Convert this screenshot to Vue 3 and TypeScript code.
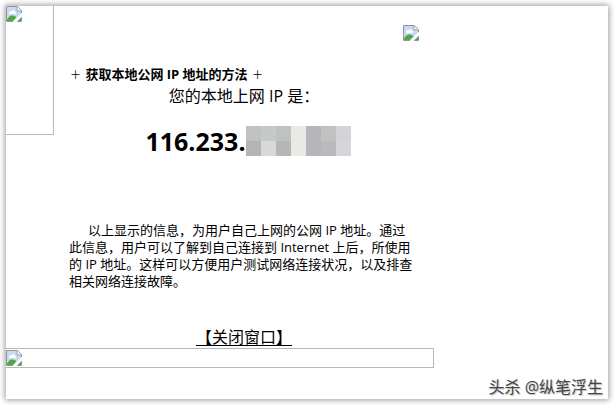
<script setup lang="ts">
const maskColors: string[] = [
  '#c1c3c3', '#c6c9c9', '#c0c1c1', '#eae9e5', '#b5b6bb', '#c2c1c1', '#d2d4d8',
  '#b3b4b4', '#d8dada', '#b5b6b5', '#eae9e5', '#b5b6bb', '#b9babe', '#d5d6d9',
]

const lines: string[] = [
  '以上显示的信息，为用户自己上网的公网 IP 地址。通过',
  '此信息，用户可以了解到自己连接到 Internet 上后，所使用',
  '的 IP 地址。这样可以方便用户测试网络连接状况，以及排查',
  '相关网络连接故障。',
]

function closeWindow(): void {
  window.close()
}
</script>

<template>
  <svg class="symbols" aria-hidden="true">
    <symbol id="broken" viewBox="0 0 16 16">
      <path d="M.5 .5H11.5L15.5 4.5V15.5H.5Z" fill="#fff" />
      <path d="M1 1H11V5H15V8L7.500 15H1Z" fill="#c6d8f3" />
      <path d="M3 6.500C3 5 5 5 5.500 5.500C6 3.500 9 4 9 6C10.500 6 10.500 8 9 8H4C2.500 8 2.500 6.500 3 6.500Z" fill="#fff" />
      <path d="M1 15V13.500C3.500 9 7.500 8.500 10.500 11.500L7 15Z" fill="#50a83f" />
      <path d="M11 15L15 11V15Z" fill="#50a83f" />
      <path d="M.5 15.500V.5H11.500L15.500 4.500V8M.5 15.500H7M11 15.500H15.500V11" fill="none" stroke="#929599" />
      <path d="M11 .5V5H15.500" fill="#f4f6f8" stroke="#a5a8ab" />
      <path d="M16 7V10.500L10.500 16H6.500L15.500 7Z" fill="#fff" />
    </symbol>
  </svg>
  <main class="sheet">
    <div class="page">
      <div class="top">
        <div class="missing side"><svg class="icon"><use href="#broken" /></svg></div>
        <article class="content">
          <svg class="icon corner"><use href="#broken" /></svg>
          <h1 class="heading"><span class="plus">＋</span> 获取本地公网 IP 地址的方法 <span class="plus">＋</span></h1>
          <p class="caption">您的本地上网 IP 是：</p>
          <div class="address">
            <strong>116.233.</strong>
            <span class="mask">
              <i v-for="(color, i) in maskColors" :key="i" :style="{ background: color }"></i>
            </span>
          </div>
          <p class="info">
            <span v-for="line in lines" :key="line" class="line">{{ line }}</span>
          </p>
          <a class="close" href="#" @click.prevent="closeWindow">【关闭窗口】</a>
        </article>
      </div>
      <div class="missing bottom"><svg class="icon"><use href="#broken" /></svg></div>
    </div>
    <div class="watermark">头杀 @纵笔浮生</div>
  </main>
</template>

<style>
body {
  background: #fff;
}
</style>

<style scoped>
.symbols {
  position: absolute;
  width: 0;
  height: 0;
}
.sheet {
  position: relative;
  box-sizing: border-box;
  min-height: calc(100vh - 12px);
  margin: 6px;
  background: #fff;
  box-shadow: 0 0 6px 1px rgba(0, 0, 0, 0.4);
  color: #000;
  font-family: "Open Sans", "Noto Sans CJK SC", sans-serif;
}
.page {
  max-width: 428px;
}
.top {
  display: flex;
  align-items: flex-start;
}
.missing {
  box-sizing: border-box;
  border: 1px solid #b8b8b8;
  border-left: 0;
}
.icon {
  display: block;
  width: 16px;
  height: 16px;
}
.side {
  flex: none;
  width: 48px;
  height: 129px;
  border-top: 0;
}
.content {
  flex: 1;
  display: flex;
  flex-direction: column;
  padding: 19px 15px 0;
}
.corner {
  align-self: flex-end;
}
.heading {
  margin: 24px 0 0;
  font-size: 13px;
  line-height: 18px;
  font-weight: 700;
}
.plus {
  display: inline-block;
  width: 13px;
  font-size: 11px;
  font-weight: 400;
  text-align: center;
}
.caption {
  margin: 1px 0 0;
  font-size: 16px;
  line-height: 22px;
  text-align: center;
}
.address {
  display: flex;
  align-items: center;
  justify-content: center;
  margin-top: 16px;
  padding-left: 8px;
  font-size: 25px;
  line-height: 36px;
}
.mask {
  display: grid;
  grid-template-columns: repeat(7, 15px);
  grid-auto-rows: 15px;
}
.info {
  margin: 63px 0 0;
  font-size: 13px;
  line-height: 17px;
  white-space: nowrap;
}
.line {
  display: block;
}
.line:first-child {
  padding-left: 19px;
}
.close {
  align-self: center;
  margin-top: 37px;
  color: #000;
  font-size: 16px;
  line-height: 21px;
  text-underline-offset: 2px;
}
.bottom {
  height: 20px;
  padding-top: 1px;
}
.watermark {
  position: absolute;
  right: 5px;
  bottom: 1px;
  color: #444;
  font-size: 16px;
  line-height: 22px;
  text-shadow: 1px 1px 1px #bbb;
}
</style>
